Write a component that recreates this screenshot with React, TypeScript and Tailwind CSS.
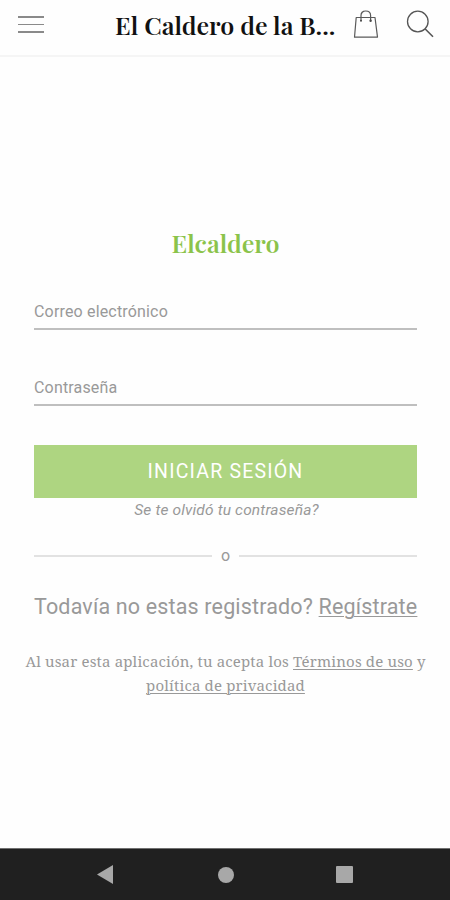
const fields = [
  { name: 'email', label: 'Correo electrónico' },
  { name: 'password', label: 'Contraseña' },
];

function BagIcon() {
  return (
    <svg width="26" height="30" viewBox="0 0 26 30" fill="none" stroke="#5a5a5a" strokeWidth="1.2">
      <path d="M3.2 8.5H22l2.5 19.7H1.5Z" strokeLinejoin="round" />
      <path d="M8 12V6.5C8 3.7 10 2 12.7 2s4.9 1.7 4.9 4.5V12" />
      <circle cx="8" cy="11.7" r="1" fill="#4a4a4a" stroke="none" />
      <circle cx="17.6" cy="11.7" r="1.2" fill="#4a4a4a" stroke="none" />
    </svg>
  );
}

function SearchIcon() {
  return (
    <svg width="28" height="28" viewBox="0 0 28 28" fill="none" stroke="#555" strokeWidth="1.3">
      <circle cx="11.8" cy="11.5" r="10.3" />
      <path d="M19 18.8l8 8" strokeWidth="1.6" />
    </svg>
  );
}

function Header() {
  return (
    <header className="flex h-[57px] items-start border-b-2 border-[#f5f5f5]">
      <button className="ml-[18px] mt-4 flex w-[26px] flex-col gap-[6px]" aria-label="Menú">
        <span className="h-[1.5px] w-full bg-[#8a8a8a]" />
        <span className="h-[1.5px] w-full bg-[#8a8a8a]" />
        <span className="h-[1.5px] w-full bg-[#8a8a8a]" />
      </button>
      <h1 className="ml-[71px] mt-[9px] w-[238px] whitespace-nowrap font-['Playfair_Display','Liberation_Serif',serif] text-[25px] font-semibold leading-8 text-[#111]">
        El Caldero de la B...
      </h1>
      <button className="mt-[9px]" aria-label="Carrito">
        <BagIcon />
      </button>
      <button className="ml-[27px] mt-[10px]" aria-label="Buscar">
        <SearchIcon />
      </button>
    </header>
  );
}

function NavBar() {
  return (
    <nav className="mt-auto flex h-[52px] items-center border-t border-[#707070] bg-[#202020]">
      <svg className="ml-[97px]" width="16" height="19" viewBox="0 0 16 19" fill="#a8a8a8">
        <path d="M0 9.5L16 0v19Z" />
      </svg>
      <span className="ml-[105px] size-4 rounded-full bg-[#a8a8a8]" />
      <span className="ml-[102px] size-[17px] rounded-[1px] bg-[#a8a8a8]" />
    </nav>
  );
}

export default function App() {
  return (
    <div className="flex h-screen w-full flex-col overflow-hidden bg-[#fefefe] font-[Roboto,sans-serif] text-[#999]">
      <Header />
      <main className="flex flex-col pl-[34px] pr-[33px]">
        <h2 className="mt-[170px] whitespace-nowrap text-center font-['Playfair_Display','Liberation_Serif',serif] text-[25px] font-semibold leading-8 text-[#8bc34a]">
          Elcaldero
        </h2>

        <div className="mt-[33px] flex flex-col gap-[38px]">
          {fields.map((field) => (
            <div key={field.name} className="h-[38px] border-b-2 border-[#bfbfbf] pt-[10px]">
              <span className="block text-base leading-5 tracking-[0.17px]">{field.label}</span>
            </div>
          ))}
        </div>

        <button className="mt-[39px] h-[53px] bg-[#aed581] text-[19.5px] tracking-[1.2px] text-white">
          INICIAR SESIÓN
        </button>
        <p className="mt-[2px] pl-[2px] text-center text-[15.5px] italic leading-5 tracking-[0.15px]">
          Se te olvidó tu contraseña?
        </p>

        <div className="mt-[26px] flex h-5 items-center gap-[9px]">
          <span className="h-[2px] flex-1 bg-[#e2e2e2]" />
          <span className="text-base leading-5">o</span>
          <span className="h-[2px] flex-1 bg-[#e2e2e2]" />
        </div>

        <p className="mt-[27px] whitespace-nowrap text-[21.5px] leading-7 tracking-[0.16px]">
          Todavía no estas registrado?{' '}
          <a className="underline decoration-1 underline-offset-2">Regístrate</a>
        </p>

        <p className="-mx-3 mt-[29px] whitespace-nowrap text-center font-['Noto_Serif','DejaVu_Serif_Condensed','DejaVu_Serif',serif] text-[15px] leading-[23.5px] tracking-[0.15px]">
          Al usar esta aplicación, tu acepta los{' '}
          <a className="underline decoration-1 underline-offset-2">Términos de uso</a> y
          <br />
          <a className="underline decoration-1 underline-offset-2">política de privacidad</a>
        </p>
      </main>
      <NavBar />
    </div>
  );
}
